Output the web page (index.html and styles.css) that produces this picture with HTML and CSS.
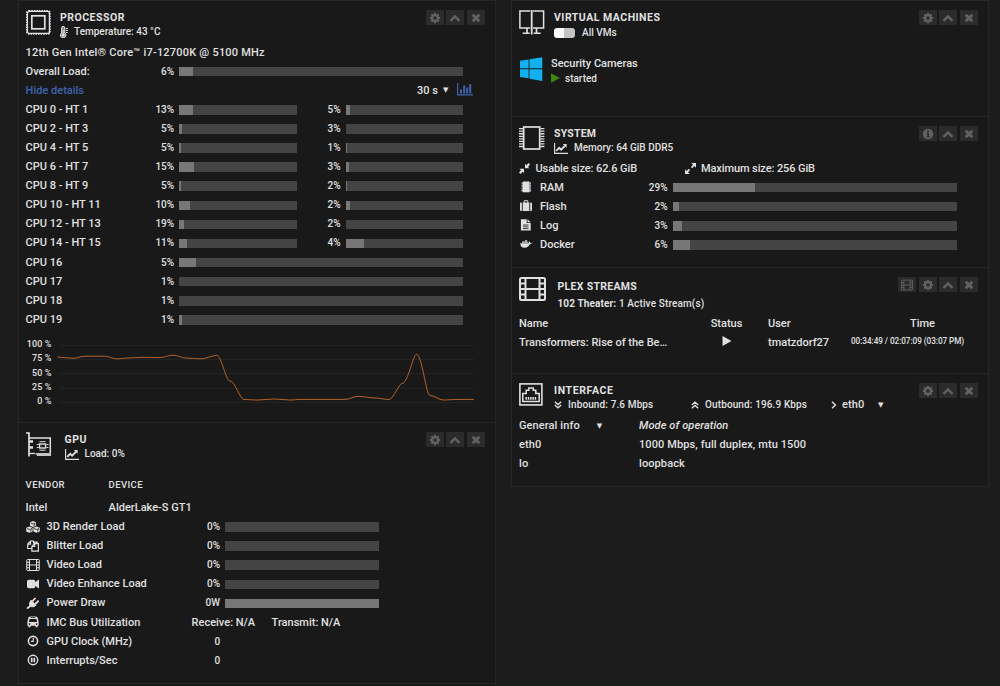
FILE: index.html
```html
<!DOCTYPE html>
<html lang="en">
<head>
  <meta charset="utf-8">
  <title>Dashboard</title>
  <link rel="stylesheet" href="styles.css">
</head>
<body>
  <!-- shared icons -->
  <svg class="defs" width="0" height="0">
    <symbol id="cog" viewBox="0 0 1792 1792"><path fill="currentColor" d="M1152 896q0-106-75-181t-181-75-181 75-75 181 75 181 181 75 181-75 75-181zm512-109v222q0 12-8 23t-20 13l-185 28q-19 54-39 91 35 50 107 138 10 12 10 25t-9 23q-27 37-99 108t-94 71q-12 0-26-9l-138-108q-44 23-91 38-16 136-29 186-7 28-36 28h-222q-14 0-24.500-8.500t-11.500-21.500l-28-184q-49-16-90-37l-141 107q-10 9-25 9-14 0-25-11-126-114-165-168-7-10-7-23 0-12 8-23 15-21 51-66.500t54-70.500q-27-50-41-99l-183-27q-13-2-21-12.500t-8-23.500v-222q0-12 8-23t19-13l186-28q14-46 39-92-40-57-107-138-10-12-10-24 0-10 9-23 26-36 98.500-107.500t94.500-71.500q13 0 26 10l138 107q44-23 91-38 16-136 29-186 7-28 36-28h222q14 0 24.500 8.500t11.500 21.500l28 184q49 16 90 37l142-107q9-9 24-9 13 0 25 10 129 119 165 170 7 8 7 22 0 12-8 23-15 21-51 66.500t-54 70.500q26 50 41 98l183 28q13 2 21 12.500t8 23.500z"/></symbol>
    <symbol id="up" viewBox="0 0 12 12"><path d="M1.500 8.900L6 4.400l4.500 4.500" fill="none" stroke="currentColor" stroke-width="2.300"/></symbol>
    <symbol id="times" viewBox="0 0 12 12"><path d="M2.700 2.700l6.600 6.600M9.300 2.700L2.700 9.300" fill="none" stroke="currentColor" stroke-width="2.800"/></symbol>
    <symbol id="info" viewBox="0 0 12 12"><circle cx="6" cy="6" r="5.200" fill="currentColor"/><path d="M5.200 2.200h1.700v1.500H5.200zM4.500 4.700h2.400v3.700h.8v1.100H4.500V8.400h.8V5.800h-.8z" fill="#2b2b2b"/></symbol>
    <symbol id="film" viewBox="0 0 27 24"><path d="M2.500 1h22q1.500 0 1.500 1.500v19q0 1.500-1.500 1.500h-22Q1 23 1 21.500v-19Q1 1 2.500 1zM6.500 1v22M20.500 1v22M6.500 12h14M1 6.500h5.500M1 12h5.500M1 17.500h5.500M20.500 6.500H26M20.500 12H26M20.500 17.500H26" fill="none" stroke="currentColor" stroke-width="2"/></symbol>
    <symbol id="line" viewBox="0 0 14 11"><path d="M.6 0v10.400H14" fill="none" stroke="currentColor" stroke-width="1.100"/><path d="M2.200 7.800l3-3 1.900 1.900 3.800-3.900" fill="none" stroke="currentColor" stroke-width="1.900"/><path d="M8.800 1h3.800v3.800z" fill="currentColor"/></symbol>
  </svg>

  <div class="page">
    <div class="column">

      <div class="tile processor">
        <div class="head">
          <svg class="logo" width="25" height="25" viewBox="0 0 25 25" fill="none" stroke="currentColor"><rect x="1.400" y="1.400" width="22" height="22" rx="2" stroke-width="1.300"/><rect x=".8" y=".8" width="23.200" height="23.200" rx="2" stroke-width="1.500" stroke-dasharray="1.500 1"/><rect x="5.800" y="5.800" width="13" height="13" stroke-width="1.700"/></svg>
          <div class="titles">
            <h2>Processor</h2>
            <p><svg class="temp" width="8" height="12" viewBox="0 0 8 12"><path d="M1.600 2a1.600 1.600 0 0 1 3.200 0v5a2.700 2.700 0 1 1-3.200 0z" fill="#8a8a8a" stroke="currentColor"/><circle cx="3.200" cy="9" r="1.500" fill="currentColor"/><path d="M3.200 4v5M5.800 2.500h2M5.800 4.500h2M5.800 6.500h2" stroke="currentColor"/></svg>Temperature: 43 °C</p>
          </div>
          <div class="buttons"><i><svg><use href="#cog"/></svg></i><i><svg><use href="#up"/></svg></i><i><svg><use href="#times"/></svg></i></div>
        </div>
        <div class="row model">12th Gen Intel® Core™ i7-12700K @ 5100 MHz</div>
        <div class="row"><span class="label">Overall Load:</span><span class="pct">6%</span><div class="bar full"><div style="width:4.9%"></div></div></div>
        <div class="row"><a class="label">Hide details</a><span class="period">30 s</span><span class="caret">▼</span>
          <svg class="chart-icon" width="16" height="13" viewBox="0 0 16 13" fill="none" stroke="currentColor"><path d="M.6 0v11.900H16" stroke-width="1.200"/><path d="M4 10.500V6.500M7.200 10.500v-8M10.200 10.500V4.500M13.200 10.500V1.200" stroke-width="2"/></svg>
        </div>
        <div class="row"><span class="label">CPU 0 - HT 1</span><span class="pct">13%</span><div class="bar"><div style="width:12%"></div></div><span class="pct second">5%</span><div class="bar"><div style="width:4%"></div></div></div>
        <div class="row"><span class="label">CPU 2 - HT 3</span><span class="pct">5%</span><div class="bar"><div style="width:2.6%"></div></div><span class="pct second">3%</span><div class="bar"><div style="width:0%"></div></div></div>
        <div class="row"><span class="label">CPU 4 - HT 5</span><span class="pct">5%</span><div class="bar"><div style="width:2%"></div></div><span class="pct second">1%</span><div class="bar"><div style="width:1%"></div></div></div>
        <div class="row"><span class="label">CPU 6 - HT 7</span><span class="pct">15%</span><div class="bar"><div style="width:13%"></div></div><span class="pct second">3%</span><div class="bar"><div style="width:2.600%"></div></div></div>
        <div class="row"><span class="label">CPU 8 - HT 9</span><span class="pct">5%</span><div class="bar"><div style="width:2%"></div></div><span class="pct second">2%</span><div class="bar"><div style="width:1%"></div></div></div>
        <div class="row"><span class="label">CPU 10 - HT 11</span><span class="pct">10%</span><div class="bar"><div style="width:9%"></div></div><span class="pct second">2%</span><div class="bar"><div style="width:4%"></div></div></div>
        <div class="row"><span class="label">CPU 12 - HT 13</span><span class="pct">19%</span><div class="bar"><div style="width:4%"></div></div><span class="pct second">2%</span><div class="bar"><div style="width:0%"></div></div></div>
        <div class="row"><span class="label">CPU 14 - HT 15</span><span class="pct">11%</span><div class="bar"><div style="width:7%"></div></div><span class="pct second">4%</span><div class="bar"><div style="width:15.500%"></div></div></div>
        <div class="row"><span class="label">CPU 16</span><span class="pct">5%</span><div class="bar full"><div style="width:6%"></div></div></div>
        <div class="row"><span class="label">CPU 17</span><span class="pct">1%</span><div class="bar full"><div style="width:0%"></div></div></div>
        <div class="row"><span class="label">CPU 18</span><span class="pct">1%</span><div class="bar full"><div style="width:0%"></div></div></div>
        <div class="row"><span class="label">CPU 19</span><span class="pct">1%</span><div class="bar full"><div style="width:1%"></div></div></div>
        <div class="graph">
          <div class="axis"><span>100 %</span><span>75 %</span><span>50 %</span><span>25 %</span><span>0 %</span></div>
          <svg width="418" height="66" viewBox="57 340 418 66" fill="none">
            <path class="grid" d="M59 345.500h415M59 359.500h415M59 373.500h415M59 388.500h415M59 402.500h415"/>
            <path class="load" d="M57.500 357C63 357 68 358.300 73 358.300S80 356.200 85 356.200H104C109 356.200 112 358.800 117 358.800S123 358 128 358S138 357.300 143 357.300S155 357.600 160 357.600S168 355.200 173 355.200S181 358 186 358S196 358.900 201 358.900S212 355.300 217 355.300C221 355.300 226 381 230 381C235 381 240 399.500 244 399.500S253 400 258 400S269 399 274 399S285 400 290 400S296 399.400 301 399.400H345C350 399.400 353 396.300 358 396.300S370 398 375 398S384 399.500 389 399.500C393 399.500 399 383.500 402 383.500C408 383.500 413 354.300 416.500 354.300C422 354.300 426 395.500 430 395.500C435 395.500 439 400 443 400S455 399.400 460 399.400H474"/>
          </svg>
        </div>
      </div>

      <div class="tile gpu">
        <div class="head">
          <svg class="logo" width="26" height="25" viewBox="0 0 26 25" fill="none" stroke="currentColor"><path d="M0 1h3v23.500" stroke-width="1.700"/><path d="M3 6h21.300v16.500" stroke-width="1.500"/><path d="M3 21.500h6" stroke-width="1.300"/><path d="M9.500 21h15.500v3H10.800v-1.500H9.500z" fill="#c4c4c4" stroke="none"/><path d="M3 9.500h4M3 15.500h4" stroke-width="2.600"/><rect x="13.600" y="12" width="6" height="4" stroke-width="1.400"/><path d="M13.500 9.700h6M13.500 18.200h6M10.800 12.500h2M10.800 15.500h2M20.500 12.500h2M20.500 15.500h2"/></svg>
          <div class="titles">
            <h2>GPU</h2>
            <p><svg class="small" width="14" height="11"><use href="#line"/></svg>Load: 0%</p>
          </div>
          <div class="buttons"><i><svg><use href="#cog"/></svg></i><i><svg><use href="#up"/></svg></i><i><svg><use href="#times"/></svg></i></div>
        </div>
        <div class="row vendor"><span>Vendor</span><span>Device</span></div>
        <div class="row device"><span>Intel</span><span>AlderLake-S GT1</span></div>
        <div class="row"><svg class="icon" width="14" height="12" viewBox="0 0 14 12"><path d="M7 0l3 1.300v3.400L7 6 4 4.700V1.300zM3.500 5.400l3.100 1.400v3.600l-3.100 1.400L.2 10.400V6.800zM10.500 5.400l3.300 1.400v3.600l-3.300 1.400-3.100-1.400V6.800z" fill="currentColor"/><path d="M4.700 2L7 3l2.300-1M1 7.500l2.500 1 2.500-1M8 7.500l2.500 1 2.500-1" fill="none" stroke="#191919" stroke-width=".8"/><path d="M8 5V3.800L9.300 3M4.500 10.500V9.300l1.400-.7M11.500 10.500V9.300l1.400-.7" stroke="#191919" stroke-width=".8" fill="none"/></svg><span class="label">3D Render Load</span><span class="pct">0%</span><div class="bar"></div></div>
        <div class="row"><svg class="icon" width="14" height="12" viewBox="0 0 14 12" fill="none" stroke="currentColor" stroke-width="1.200"><path d="M5.500 8.500H1.700V4L4.500 1h3v2.500M1.700 4.200h2.800V1M5.900 11.200V6.300l2.800-2.700h3.700v7.600zM5.900 6.500h2.800V3.600M8.700 3.600V2.200h2.500v1.400"/></svg><span class="label">Blitter Load</span><span class="pct">0%</span><div class="bar"></div></div>
        <div class="row"><svg class="icon" width="14" height="12"><use href="#film"/></svg><span class="label">Video Load</span><span class="pct">0%</span><div class="bar"></div></div>
        <div class="row"><svg class="icon" width="14" height="12" viewBox="0 0 14 12"><path d="M2.800 1.700h4.700q1.800 0 1.800 1.800v.8l3-2.600h.7v8.600h-.7l-3-2.600v.8q0 1.800-1.800 1.800H2.800Q1 10.300 1 8.500v-5q0-1.800 1.800-1.800z" fill="currentColor"/></svg><span class="label">Video Enhance Load</span><span class="pct">0%</span><div class="bar"></div></div>
        <div class="row"><svg class="icon" width="14" height="12" viewBox="0 0 14 12" stroke="currentColor"><path d="M5 3.200l5 5Q8 10.400 5.500 9.700L4 9Q2.600 6 5 3.200z" fill="currentColor"/><path d="M6.500 4.200L9.500 1M9.300 7L12.600 3.700M4.500 8.700L1 11.600" stroke-width="1.800"/></svg><span class="label">Power Draw</span><span class="pct">0W</span><div class="bar"><div style="width:100%"></div></div></div>
        <div class="row"><svg class="icon" width="14" height="12" viewBox="0 0 14 12"><path fill-rule="evenodd" d="M4.200.5h5.600q1.700 0 2 1.500l.8 4v3.700h-1v1.500H9.500V9.700h-5v1.500H2.400V9.700h-1V6l.8-4q.3-1.500 2-1.500zM4.500 1.300v.7h5v-.7zM3.500 3L3 6h8l-.5-3zM3.500 7.200a.8.8 0 1 0 .1 0zM10.500 7.200a.8.8 0 1 0 .1 0z" fill="currentColor"/></svg><span class="label">IMC Bus Utilization</span><span class="bus">Receive: N/A</span><span>Transmit: N/A</span></div>
        <div class="row"><svg class="icon" width="14" height="12" viewBox="0 0 14 12" fill="none" stroke="currentColor"><circle cx="7" cy="6" r="4.600" stroke-width="1.600"/><path d="M7.300 3v3.400H5" stroke-width="1.100"/></svg><span class="label">GPU Clock (MHz)</span><span class="pct">0</span></div>
        <div class="row"><svg class="icon" width="14" height="12" viewBox="0 0 14 12" fill="none" stroke="currentColor"><circle cx="7" cy="6" r="4.700" stroke-width="1.400"/><path d="M5.700 3.700v4.600M8.300 3.700v4.600" stroke-width="1.700"/></svg><span class="label">Interrupts/Sec</span><span class="pct">0</span></div>
      </div>
      <div class="tile rest"></div>
    </div>

    <div class="column">

      <div class="tile vms">
        <div class="head">
          <svg class="logo" width="26" height="25" viewBox="0 0 26 25" fill="none" stroke="currentColor" stroke-width="1.500"><path d="M11.300 1H.9v17h10.400M14 1h10.600v17H14"/><path d="M12.700 0v24.500" stroke-width="1.800"/><path d="M8 18v5M17.500 18v5" stroke-width="1.700"/><path d="M3.700 23.300h7M14.700 23.300h7"/></svg>
          <div class="titles">
            <h2>Virtual Machines</h2>
            <p><span class="switch"></span>All VMs</p>
          </div>
          <div class="buttons"><i><svg><use href="#cog"/></svg></i><i><svg><use href="#up"/></svg></i><i><svg><use href="#times"/></svg></i></div>
        </div>
        <div class="vm">
          <svg width="23" height="24" viewBox="0 0 23 24"><path d="M0 3.700l8.600-1.200v8.700H0zM9.500 2.300L22.300.3v10.900H9.500zM0 12.200h8.600v9L0 20zM9.500 12.200h12.800V24L9.500 21.700z" fill="#12b0ee"/></svg>
          <div>
            <div class="name">Security Cameras</div>
            <div class="state"><svg width="9" height="10" viewBox="0 0 9 10"><path d="M0 .3l9 4.700-9 4.700z" fill="#3f8410"/></svg>started</div>
          </div>
        </div>
      </div>

      <div class="tile system">
        <div class="head">
          <svg class="logo" width="26" height="24" viewBox="0 0 26 24" fill="none" stroke="currentColor"><rect x="4.700" y="1" width="16" height="22" stroke-width="1.700"/><path d="M2 2v20.500M23.400 2v20.500" stroke-width="4" stroke-dasharray="1.300 1.250"/></svg>
          <div class="titles">
            <h2>System</h2>
            <p><svg class="small" width="14" height="11"><use href="#line"/></svg>Memory: 64 GiB DDR5</p>
          </div>
          <div class="buttons"><i><svg><use href="#info"/></svg></i><i><svg><use href="#up"/></svg></i><i><svg><use href="#times"/></svg></i></div>
        </div>
        <div class="row sizes">
          <svg width="11" height="11" viewBox="0 0 11 11" fill="currentColor"><path d="M6 .8v4.500h4.500L9 3.900 11 1.500 9.600 0 7.400 2.200zM5 10.300V5.800H.5L2 7.200 0 9.500 1.500 11l2.200-2.200z"/></svg>
          <span class="usable">Usable size: 62.6 GiB</span>
          <svg width="11" height="11" viewBox="0 0 11 11" fill="currentColor"><path d="M6.300 0H11v4.700L9.400 3.100 7.200 5.200 5.900 3.900 8 1.700zM4.700 11H0V6.300l1.600 1.600 2.200-2.100 1.300 1.300L3 9.300z"/></svg>
          <span>Maximum size: 256 GiB</span>
        </div>
        <div class="row"><svg class="icon" width="14" height="12" viewBox="0 0 14 12"><path d="M4 .5h6.500v10.800H4z" fill="currentColor"/><path d="M3.300 1.500v9M11.200 1.500v9" stroke="currentColor" stroke-width="1.500" stroke-dasharray="1.300 .6"/></svg><span class="label">RAM</span><span class="pct">29%</span><div class="bar"><div style="width:29%"></div></div></div>
        <div class="row"><svg class="icon" width="14" height="12" viewBox="0 0 14 12"><path d="M1 3.500q0-1 1-1h.8V11H2q-1 0-1-1zM3.700 11V2.500h1V1q0-.7.7-.7h3.200q.7 0 .7.700v1.500h1V11zM5.600 2.500h2.800V1.300H5.600zM11.200 2.500h.8q1 0 1 1V10q0 1-1 1h-.8z" fill="currentColor" fill-rule="evenodd"/></svg><span class="label">Flash</span><span class="pct">2%</span><div class="bar"><div style="width:2.2%"></div></div></div>
        <div class="row"><svg class="icon" width="14" height="12" viewBox="0 0 14 12"><path d="M1.900.3h5.800v3.600h4v7.600H1.900zM8.500.3l3.200 2.900H8.500z" fill="currentColor"/><path d="M4 6h5.500M4 7.800h5.500M4 9.600h5.500" stroke="#191919" stroke-width=".8"/></svg><span class="label">Log</span><span class="pct">3%</span><div class="bar"><div style="width:3.300%"></div></div></div>
        <div class="row"><svg class="icon" width="14" height="12" viewBox="0 0 14 12"><path d="M1.200 5.200H9.800q-.4-1.200.3-2 1 .6 1 1.500 1-.2 1.800.2-.6 1.200-2 1.200Q9.500 9.800 5.500 9.800 1.500 9.800 1.200 5.200zM3 3.600h5.800v1.200H3zM6.300 1.900h1.500v1.400H6.300z" fill="currentColor"/></svg><span class="label">Docker</span><span class="pct">6%</span><div class="bar"><div style="width:6.200%"></div></div></div>
      </div>

      <div class="tile plex">
        <div class="head">
          <svg class="logo" width="27" height="24"><use href="#film"/></svg>
          <div class="titles">
            <h2>Plex Streams</h2>
            <p><b>102 Theater:</b>&nbsp;1 Active Stream(s)</p>
          </div>
          <div class="buttons"><i><svg width="13" height="11"><use href="#film"/></svg></i><i><svg><use href="#cog"/></svg></i><i><svg><use href="#up"/></svg></i><i><svg><use href="#times"/></svg></i></div>
        </div>
        <div class="row stream"><span>Name</span><span>Status</span><span>User</span><span class="time-head">Time</span></div>
        <div class="row stream"><span>Transformers: Rise of the Be…</span><span><svg width="10" height="10" viewBox="0 0 10 10"><path d="M.5 0l9 5-9 5z" fill="currentColor"/></svg></span><span>tmatzdorf27</span><span class="time">00:34:49 / 02:07:09 (03:07 PM)</span></div>
      </div>

      <div class="tile interface">
        <div class="head">
          <svg class="logo" width="24" height="23" viewBox="0 0 24 23" fill="none" stroke="currentColor"><rect x=".9" y=".9" width="22" height="21" stroke-width="1.600"/><path d="M3.800 18.400v-8h3.400V7.200h2.600V5h4.400v2.200h2.600v3.200h3.400v8z" stroke-width="1.500"/><path d="M6.500 15.400h11.200" stroke-width="2.600" stroke-dasharray="1.500 .8"/></svg>
          <div class="titles">
            <h2>Interface</h2>
            <p>
              <svg width="8" height="8" viewBox="0 0 8 8" fill="none" stroke="currentColor" stroke-width="1.300"><path d="M.8.800L4 3.600 7.200.8M.8 4L4 6.800 7.200 4"/></svg><span class="inbound">Inbound: 7.6 Mbps</span>
              <svg width="8" height="8" viewBox="0 0 8 8" fill="none" stroke="currentColor" stroke-width="1.300"><path d="M.8 4L4 1.200 7.200 4M.8 7.200L4 4.400l3.200 2.800"/></svg><span class="outbound">Outbound: 196.9 Kbps</span>
              <svg width="6" height="8" viewBox="0 0 6 8" fill="none" stroke="currentColor" stroke-width="1.400"><path d="M1 .7L4.400 4 1 7.300"/></svg><span class="port">eth0</span><span class="caret">▼</span>
            </p>
          </div>
          <div class="buttons"><i><svg><use href="#cog"/></svg></i><i><svg><use href="#up"/></svg></i><i><svg><use href="#times"/></svg></i></div>
        </div>
        <div class="row net"><span>General info<span class="caret">▼</span></span><em>Mode of operation</em></div>
        <div class="row net"><span>eth0</span><span>1000 Mbps, full duplex, mtu 1500</span></div>
        <div class="row net"><span>lo</span><span>loopback</span></div>
      </div>
    </div>
  </div>
</body>
</html>
```
FILE: styles.css
```css
* {
  box-sizing: border-box;
}

body {
  margin: 0;
  height: 686px;
  overflow: hidden;
  background-color: #1c1c1c;
  color: #e0e0e0;
  font-family: Roboto, "Noto Sans", sans-serif;
  font-size: 11px;
  font-weight: 500;
}

.defs {
  position: absolute;
}

svg {
  flex: none;
}

h2, p {
  margin: 0;
}

.page {
  display: flex;
  gap: 15px;
  padding-left: 18px;
}

.column {
  width: 478px;
}

.tile {
  padding-left: 7px;
  background-color: #191919;
  border: 1px solid #262626;
  border-bottom: none;
}

.processor { height: 422px; }
.gpu { height: 261px; }
.rest { height: 10px; }
.vms { height: 116px; }
.system { height: 151px; }
.plex { height: 106px; }
.interface {
  height: 114px;
  border-bottom: 1px solid #262626;
}

.head {
  display: flex;
  align-items: flex-start;
  height: 41.500px;
  padding-top: 9px;
}

.logo {
  margin-right: 9px;
}

.titles {
  padding-top: 1px;
}

.titles h2 {
  font-size: 10.500px;
  line-height: 14px;
  font-weight: 700;
  letter-spacing: .5px;
  text-transform: uppercase;
}

.titles p {
  display: flex;
  align-items: center;
  height: 14px;
  font-size: 10px;
  line-height: 14px;
  white-space: nowrap;
}

.temp {
  margin-right: 6px;
}

.small {
  margin-right: 6px;
}

.buttons {
  display: flex;
  gap: 2.500px;
  margin-left: auto;
  margin-right: 10.500px;
}

.buttons i {
  display: flex;
  align-items: center;
  justify-content: center;
  width: 18px;
  height: 15px;
  background-color: #2b2b2b;
  color: #626262;
}

.buttons svg {
  width: 12px;
  height: 12px;
}

.row {
  display: flex;
  align-items: center;
  height: 19.100px;
  white-space: nowrap;
}

.processor .row, .gpu .row {
  margin-left: -.4px;
}

.model {
  letter-spacing: .22px;
}

.label {
  width: 100px;
}

a.label {
  color: #4063b0;
}

.pct {
  width: 48.500px;
  margin-right: 5px;
  font-size: 10px;
  text-align: right;
}

.pct.second {
  width: 44px;
}

.bar {
  width: 117.500px;
  height: 9.500px;
  margin-top: 1px;
  background-color: #444;
}

.bar.full {
  width: 284px;
}

.bar div {
  height: 100%;
  background-color: #777;
}

.period {
  margin-left: 291.500px;
}

.caret {
  margin-left: 5px;
  font-family: "DejaVu Sans", sans-serif;
  font-size: 7px;
}

.chart-icon {
  margin-left: 9px;
  margin-top: -2px;
  color: #4063b0;
}

.graph {
  display: flex;
  margin-top: 9px;
}

.graph svg {
  margin-top: 2px;
}

.axis {
  width: 25.500px;
  margin-right: 5.500px;
  font-size: 9px;
  letter-spacing: .1px;
  text-align: right;
  white-space: nowrap;
}

.axis span {
  display: block;
  height: 14.400px;
  line-height: 12px;
}

.grid {
  stroke: #232323;
}

.load {
  stroke: #b3632a;
}

/* gpu */
.gpu .head {
  height: 51px;
}

.gpu .logo {
  margin-right: 12.500px;
}

.gpu .vendor {
  height: 20px;
  font-size: 9.500px;
  letter-spacing: .4px;
  text-transform: uppercase;
}

.gpu .device {
  height: 23px;
  padding-top: 3px;
}

.vendor span:first-child, .device span:first-child {
  width: 83px;
}

.icon {
  margin-right: 7px;
}

.gpu .label {
  width: 125px;
}

.gpu .bar {
  width: 154px;
}

.bus {
  width: 80px;
  margin-left: 20px;
}

/* virtual machines */
.vms .titles p {
  height: 15px;
}

.switch {
  width: 21px;
  height: 10px;
  margin-right: 7px;
  border-radius: 3px;
  background: linear-gradient(to right, #fafafa 50%, #c4c4c4 50%);
}

.vm {
  display: flex;
  gap: 9px;
  padding-top: 14px;
}

.vm > svg {
  margin-left: 1px;
  margin-right: -1px;
}

.name {
  line-height: 13px;
}

.state {
  display: flex;
  align-items: center;
  gap: 5px;
  height: 17px;
  font-size: 10px;
}

/* system */
.system .titles h2 {
  letter-spacing: .2px;
}

.sizes {
  letter-spacing: -.1px;
}

.usable {
  width: 149px;
  margin-left: 5.500px;
}

.sizes span:last-child {
  margin-left: 5.500px;
}

.system .label {
  width: 79px;
}

.system .bar {
  width: 284px;
}

/* plex */
.plex .head {
  height: 46px;
}

.plex .logo {
  margin-right: 11.500px;
}

.plex .titles {
  padding-top: 3px;
}

.plex .titles h2 {
  letter-spacing: .3px;
}

.plex .titles p {
  height: 19px;
  letter-spacing: .13px;
}

.stream span {
  flex: none;
}

.stream span:nth-child(1) { width: 191.500px; }
.stream span:nth-child(2) {
  width: 32px;
  margin-right: 25.500px;
  text-align: center;
}
.stream span:nth-child(3) { width: 83px; }
.stream .time-head {
  width: 143px;
  text-align: center;
}

.stream .time {
  width: 113px;
  margin-bottom: 4px;
  font-size: 8.200px;
  letter-spacing: -.05px;
  text-align: center;
}

/* interface */
.interface .logo {
  margin-right: 11px;
}

.interface .titles h2 {
  letter-spacing: .6px;
}

.interface .titles p {
  height: 13px;
  letter-spacing: .12px;
}

.inbound {
  width: 123px;
  margin-left: 6px;
}

.outbound {
  width: 126px;
  margin-left: 6px;
}

.port {
  width: 31px;
  margin-left: 5px;
  font-size: 11px;
}

.net {
  letter-spacing: .1px;
}

.net > :first-child {
  width: 120px;
}

.net .caret {
  margin-left: 17px;
  vertical-align: 1px;
}
```
